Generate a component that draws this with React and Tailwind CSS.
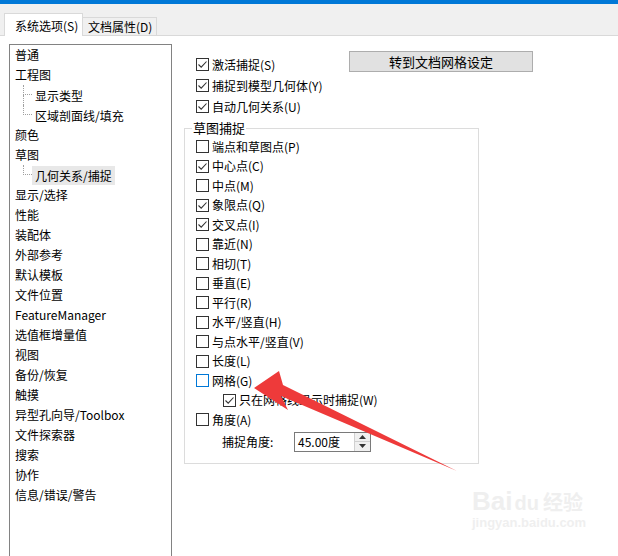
import React from "react";

const FONT = { fontFamily: '"Noto Sans CJK SC", "Noto Sans", sans-serif' };

function Box({ checked, hover }) {
  return (
    <span
      className={
        hover
          ? "w-[13px] h-[13px] border border-[#0078d7] bg-white flex items-center justify-center shrink-0"
          : "w-[13px] h-[13px] border border-[#333333] bg-white flex items-center justify-center shrink-0"
      }
    >
      {checked && (
        <svg width="11" height="11" viewBox="0 0 11 11">
          <path d="M1.5 5.5 L4.2 8.2 L9.5 2.5" fill="none" stroke="#333" strokeWidth="1.1" />
        </svg>
      )}
    </span>
  );
}

function Row({ label, checked, hover, indent, tall }) {
  return (
    <div className={tall ? "flex items-center h-[21px]" : "flex items-center h-[19.5px]"}>
      {indent && <span className="w-[27px] shrink-0" />}
      <Box checked={checked} hover={hover} />
      <span className="ml-[3px] whitespace-nowrap">{label}</span>
    </div>
  );
}

const tree = [
  { t: "普通" },
  { t: "工程图" },
  { t: "显示类型", child: true },
  { t: "区域剖面线/填充", child: true, last: true },
  { t: "颜色" },
  { t: "草图" },
  { t: "几何关系/捕捉", child: true, last: true, sel: true },
  { t: "显示/选择" },
  { t: "性能" },
  { t: "装配体" },
  { t: "外部参考" },
  { t: "默认模板" },
  { t: "文件位置" },
  { t: "FeatureManager" },
  { t: "选值框增量值" },
  { t: "视图" },
  { t: "备份/恢复" },
  { t: "触摸" },
  { t: "异型孔向导/Toolbox" },
  { t: "文件探索器" },
  { t: "搜索" },
  { t: "协作" },
  { t: "信息/错误/警告" },
];

const snaps = [
  ["端点和草图点(P)", false],
  ["中心点(C)", true],
  ["中点(M)", false],
  ["象限点(Q)", true],
  ["交叉点(I)", true],
  ["靠近(N)", false],
  ["相切(T)", false],
  ["垂直(E)", false],
  ["平行(R)", false],
  ["水平/竖直(H)", false],
  ["与点水平/竖直(V)", false],
  ["长度(L)", false],
];

export default function App() {
  return (
    <div
      className="relative w-[618px] h-[556px] bg-white overflow-hidden text-[12px] text-black leading-[16px]"
      style={FONT}
    >
      <div className="h-[4px] bg-[#0078d7]" />
      {/* tab strip */}
      <div className="h-[32px] bg-[#f0f0f0] border-b border-[#d9d9d9] flex items-end pl-[4px]">
        <div className="h-[23px] mb-[-1px] w-[79px] bg-white border border-b-0 border-[#d9d9d9] flex items-center pl-[10px] pt-[1px]">
          系统选项(S)
        </div>
        <div className="h-[18px] w-[74px] bg-[#f0f0f0] border border-l-0 border-b-0 border-[#d9d9d9] flex items-center pl-[5px]">
          文档属性(D)
        </div>
      </div>

      <div className="flex">
        {/* left tree list */}
        <div className="ml-[9px] mt-[8px] w-[163px] h-[530px] border border-[#828282] shrink-0">
          {tree.map((it, i) =>
            it.child ? (
              <div key={i} className="flex h-[20px] pl-[13px]">
                <span className="w-[9px] flex flex-col shrink-0">
                  <span className="h-[10px] border-l border-b border-dotted border-[#a0a0a0]" />
                  <span
                    className={
                      it.last
                        ? "flex-1"
                        : "flex-1 border-l border-dotted border-[#a0a0a0]"
                    }
                  />
                </span>
                <span
                  className={
                    it.sel
                      ? "h-[19px] mt-[1px] px-[3px] bg-[#e8e8e8] flex items-center whitespace-nowrap"
                      : "h-[19px] mt-[1px] px-[3px] flex items-center whitespace-nowrap"
                  }
                >
                  {it.t}
                </span>
              </div>
            ) : (
              <div key={i} className="h-[20px] flex items-center pl-[5px] whitespace-nowrap">
                {it.t}
              </div>
            )
          )}
        </div>

        {/* right panel */}
        <div className="ml-[12px] pt-[18px] flex flex-col">
          <div className="flex">
            <div className="w-[165px] pl-[12px]">
              <Row label="激活捕捉(S)" checked tall />
              <Row label="捕捉到模型几何体(Y)" checked tall />
              <Row label="自动几何关系(U)" checked tall />
            </div>
            <div className="mt-[-3px] w-[184px] h-[21px] bg-[#e1e1e1] border border-[#adadad] flex items-center justify-center text-[13px]">
              转到文档网格设定
            </div>
          </div>

          <fieldset className="mt-[3px] w-[295px] border border-[#dcdcdc] pl-[11px] pt-[1px] pb-[10px]">
            <legend className="ml-[-4px] px-[1px] text-[13px] leading-[16px]">草图捕捉</legend>
            {snaps.map(([l, c]) => (
              <Row key={l} label={l} checked={c} />
            ))}
            <Row label="网格(G)" hover />
            <Row label="只在网格线显示时捕捉(W)" checked indent />
            <Row label="角度(A)" />
            <div className="flex items-center h-[22px] mt-[1px] pl-[26px]">
              <span className="w-[72px]">捕捉角度:</span>
              <div className="flex h-[20px] w-[77px] border border-[#7a7a7a] bg-white">
                <span className="flex-1 flex items-center pl-[3px] text-[12px]">45.00度</span>
                <div className="w-[16px] flex flex-col border-l border-[#d0d0d0] bg-[#f0f0f0]">
                  <div className="flex-1 flex items-center justify-center border-b border-[#d0d0d0]">
                    <svg width="7" height="4" viewBox="0 0 7 4">
                      <path d="M0 4 L3.5 0 L7 4 Z" fill="#333" />
                    </svg>
                  </div>
                  <div className="flex-1 flex items-center justify-center">
                    <svg width="7" height="4" viewBox="0 0 7 4">
                      <path d="M0 0 L3.5 4 L7 0 Z" fill="#333" />
                    </svg>
                  </div>
                </div>
              </div>
            </div>
          </fieldset>
        </div>
      </div>

      {/* red arrow annotation */}
      <svg
        className="absolute left-0 top-0 pointer-events-none"
        width="618"
        height="556"
        viewBox="0 0 618 556"
      >
        <polygon
          points="254,388 279,371 283,385 457,471 281,396 288,410"
          fill="#ee3a3a"
        />
      </svg>

      {/* watermark */}
      <div className="absolute left-[472px] top-[486px] flex flex-col items-start pointer-events-none text-[#efefef]">
        <div className="flex items-end">
          <span className="text-[26px] leading-[30px] font-bold" style={{ fontFamily: '"Liberation Sans", sans-serif' }}>
            Bai
          </span>
          <span className="text-[20px] leading-[26px] font-bold ml-[2px]" style={{ fontFamily: '"Liberation Sans", sans-serif' }}>
            du
          </span>
          <span className="text-[20px] leading-[28px] font-bold ml-[4px]">经验</span>
        </div>
        <span className="text-[13px] leading-[14px] font-bold" style={{ fontFamily: '"Liberation Sans", sans-serif' }}>
          jingyan.baidu.com
        </span>
      </div>
    </div>
  );
}
